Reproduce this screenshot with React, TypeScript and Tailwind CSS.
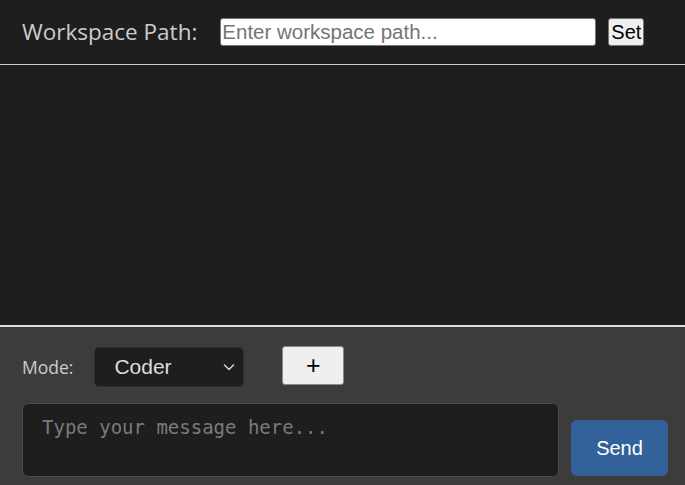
import React from "react";

const ChevronIcon = () => (
  <svg width="14" height="14" viewBox="0 0 14 14" fill="none" className="text-[#d0d0d0]">
    <path d="M2.5 5l4.5 4.5L11.5 5" stroke="currentColor" strokeWidth="1.6" strokeLinecap="round" strokeLinejoin="round" />
  </svg>
);

export default function App() {
  return (
    <div className="w-[685px] h-[485px] overflow-hidden flex flex-col bg-[#1e1e1e]">
      {/* Header: workspace path */}
      <header className="h-[65px] shrink-0 flex items-center pl-[22px] border-b border-[#cfcfcf]">
        <span className="font-['Open_Sans',sans-serif] text-[22.5px] text-[#cccccc] leading-none">
          Workspace Path:
        </span>
        <input
          type="text"
          placeholder="Enter workspace path..."
          className="ml-[23px] w-[376px] h-[28px] bg-white rounded-[3px] border border-[#767676] px-[1px] font-['Liberation_Sans',Arial,sans-serif] text-[20.5px] text-black placeholder:text-[#757575] outline-none"
        />
        <button className="ml-[12px] w-[36px] h-[28px] bg-[#efefef] border border-[#767676] rounded-[3px] font-['Liberation_Sans',Arial,sans-serif] text-[20px] text-black leading-none flex items-center justify-center">
          Set
        </button>
      </header>

      {/* Message area */}
      <main className="flex-1" />

      {/* Input panel */}
      <footer className="h-[160px] shrink-0 bg-[#3c3c3c] border-t-2 border-[#dcdcdc] pl-[22px] pr-[17px] pt-[18px]">
        <div className="flex items-center">
          <span className="font-['Open_Sans',sans-serif] text-[17.5px] text-[#cccccc] mt-[3px]">Mode:</span>
          <div className="ml-[21px] mt-[2px] w-[150px] h-[40px] bg-[#1e1e1e] border border-[#2e2e2e] rounded-[5px] flex items-center justify-between pl-[19px] pr-[7px]">
            <span className="font-['Liberation_Sans',Arial,sans-serif] text-[21px] text-[#dddddd]">Coder</span>
            <ChevronIcon />
          </div>
          <button className="ml-[38px] mb-[1px] w-[62px] h-[39px] bg-[#efefef] border border-[#8a8a8a] rounded-[3px] font-['Liberation_Sans',Arial,sans-serif] font-medium text-[25px] text-black leading-none flex items-center justify-center">
            +
          </button>
        </div>

        <div className="flex items-end mt-[16px]">
          <textarea
            placeholder="Type your message here..."
            className="w-[537px] h-[74px] resize-none bg-[#1e1e1e] border border-[#4a4a4a] rounded-[6px] pl-[19px] pt-[9px] font-['DejaVu_Sans_Mono',monospace] text-[19px] text-[#dddddd] placeholder:text-[#7a7a7a] outline-none"
          />
          <button className="ml-[12px] mb-[1px] w-[97px] h-[56px] bg-[#336199] rounded-[6px] font-['Liberation_Sans',Arial,sans-serif] text-[20px] text-white">
            Send
          </button>
        </div>
      </footer>
    </div>
  );
}
